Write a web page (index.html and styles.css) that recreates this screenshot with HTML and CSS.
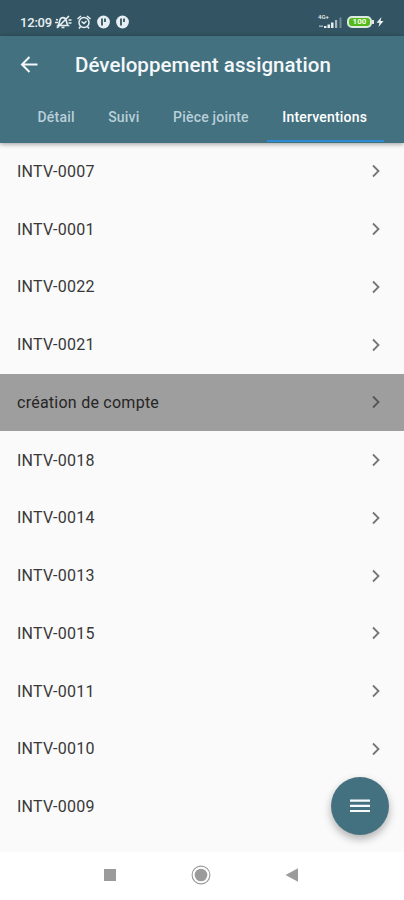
FILE: index.html
```
<!DOCTYPE html>
<html lang="fr">
<head>
  <meta charset="UTF-8">
  <title>Développement assignation</title>
  <link rel="stylesheet" href="styles.css">
</head>
<body>
  <div class="status-bar">
    <span class="time">12:09</span>
    <svg class="status-left" width="78" height="16" viewBox="0 0 78 16" fill="none" stroke="#e8eff2" stroke-width="1.5">
      <!-- muted bell -->
      <path d="M4 11.500c2-2 1-6 3-7.200q2-1.200 4 0c2 1.200 1 5.200 3 7.200zM7.500 13.500h3M3 14L15 2M1 8.500h3M2 5.500l2 .5M14.500 6h3M14.500 9h3" stroke-width="1.700"/>
      <!-- alarm -->
      <circle cx="30" cy="8.500" r="5"/>
      <path d="M23.500 5l3.500-3M36.500 5L33 2M27.500 7.500l2.500 2 2.500-2.500M26.500 12.500l-1.500 2M33.500 12.500l1.500 2"/>
      <g fill="#e8eff2" stroke="none">
        <circle cx="49.500" cy="8" r="6.400"/>
        <circle cx="68.500" cy="8" r="6.400"/>
      </g>
      <path stroke="#335563" stroke-width="1.800" d="M48 4.500v7M51 4.500v3.500M67 4.500v7M70 4.500v3.500"/>
    </svg>
    <div class="signal">
      <span class="network">4G+</span>
      <svg width="26" height="15" viewBox="0 0 26 15" fill="#e8eff2">
        <path d="M1 10.500h4v1.500H1z" opacity=".6"/>
        <path d="M6 11h2.500v2H6zM9.500 9.500H12V13H9.500zM13 7.500h2.500V13H13z"/>
        <path d="M17 5h2.200v8H17z" opacity=".65"/>
        <path d="M21.500 2.500h2V13h-2z" opacity=".35"/>
      </svg>
    </div>
    <div class="battery">100</div>
    <svg class="bolt" width="8" height="12" viewBox="0 0 8 12" fill="#f1f5f6"><path d="M5.500 1L.5 6.800h3L2.500 11l5-6h-3z"/></svg>
  </div>

  <header class="app-bar">
    <div class="title-row">
      <svg class="back" width="18" height="18" viewBox="0 0 18 18" fill="none" stroke="#f4f8fa" stroke-width="2">
        <path d="M17.500 8.500H2.500M9.500 1L2 8.500 9.500 16"/>
      </svg>
      <h1>Développement assignation</h1>
    </div>
    <nav class="tabs">
      <span class="tab">Détail</span>
      <span class="tab">Suivi</span>
      <span class="tab">Pièce jointe</span>
      <span class="tab active">Interventions</span>
    </nav>
  </header>

  <ul class="list"></ul>

  <button class="fab" aria-label="Menu">
    <svg width="20" height="14" viewBox="0 0 20 14" fill="#f7fafb"><path d="M0 .5h20v2.200H0zM0 5.700h20v2.200H0zM0 10.900h20v2.200H0z"/></svg>
  </button>

  <footer class="nav-bar">
    <svg width="14" height="14" viewBox="0 0 14 14" fill="#9b9b9b"><path d="M1 1h12v12H1z"/></svg>
    <svg width="20" height="20" viewBox="0 0 20 20" fill="#9b9b9b">
      <circle cx="10" cy="10" r="6.300"/>
      <circle cx="10" cy="10" r="8.900" fill="none" stroke="#9b9b9b" stroke-width="1.100"/>
    </svg>
    <svg width="14" height="14" viewBox="0 0 14 14" fill="#9b9b9b"><path d="M13 .3v13.400L.5 7z"/></svg>
  </footer>

  <script>
    const items = [
      'INTV-0007', 'INTV-0001', 'INTV-0022', 'INTV-0021', 'création de compte', 'INTV-0018',
      'INTV-0014', 'INTV-0013', 'INTV-0015', 'INTV-0011', 'INTV-0010', 'INTV-0009'
    ];
    const selected = 4;

    document.querySelector('.list').innerHTML = items.map((name, i) => `
      <li class="item${i === selected ? ' selected' : ''}">
        <span>${name}</span>
        <svg width="8" height="14" viewBox="0 0 8 14" fill="none" stroke-width="1.800"><path d="M1 1.500L6.500 7 1 12.500"/></svg>
      </li>`).join('');
  </script>
</body>
</html>
```
FILE: styles.css
```
* {
  box-sizing: border-box;
}
body {
  display: flex;
  flex-direction: column;
  height: 900px;
  margin: 0;
  overflow: hidden;
  font-family: Roboto, sans-serif;
  background-color: #fafafa;
}
.status-bar {
  display: flex;
  align-items: center;
  flex: none;
  height: 36px;
  padding: 8px 20px 0;
  color: #e8eff2;
  background-color: #335563;
}
.time {
  width: 34px;
  font-size: 13px;
  font-weight: 500;
  letter-spacing: -0.2px;
}
.signal {
  display: flex;
  margin-left: auto;
  width: 26px;
  margin-right: 3px;
  position: relative;
}
.network {
  position: absolute;
  top: -1px;
  left: 0;
  font-size: 6px;
  font-weight: 500;
  line-height: 6px;
}
.battery {
  position: relative;
  width: 25px;
  height: 12px;
  border: 2px solid #dbe9df;
  border-radius: 5px;
  background-color: #55b91d;
  color: #f2ffe9;
  font-size: 8px;
  font-weight: 700;
  line-height: 8px;
  text-align: center;
}
.battery::after {
  content: '';
  position: absolute;
  top: 2px;
  right: -4px;
  width: 2px;
  height: 4px;
  background-color: #dbe9df;
}
.bolt {
  margin-left: 4px;
}
.app-bar {
  flex: none;
  height: 106.500px;
  color: #f4f8fa;
  background-color: #43717f;
  box-shadow: 0 1px 5px rgba(0, 0, 0, 0.4);
  z-index: 1;
}
.title-row {
  display: flex;
  align-items: center;
  height: 57px;
  padding-left: 20px;
}
h1 {
  margin: 0 0 0 37px;
  font-size: 20.500px;
  font-weight: 500;
  letter-spacing: 0.04px;
}
.tabs {
  display: flex;
  height: 49px;
  padding: 0 19.500px;
}
.tab {
  padding: 0 15.500px 0 18px;
  font-size: 14px;
  font-weight: 500;
  line-height: 48px;
  letter-spacing: 0.2px;
  color: #b9cfda;
  white-space: nowrap;
}
.tab.active {
  margin-left: 3px;
  padding: 0 17px 0 15px;
  color: #fff;
  border-bottom: 2px solid #2d8bd6;
}
.list {
  flex: 1;
  min-height: 0;
  margin: 0;
  padding: 0;
  list-style: none;
}
.item {
  display: flex;
  align-items: center;
  justify-content: space-between;
  height: 57.750px;
  padding: 0 24px 0 17px;
  font-size: 16px;
  letter-spacing: 0.25px;
  color: #383838;
  stroke: #757575;
}
.item.selected {
  background-color: #9e9e9e;
  color: #262626;
  stroke: #555;
}
.fab {
  position: absolute;
  left: 331px;
  top: 777px;
  display: flex;
  align-items: center;
  justify-content: center;
  width: 58px;
  height: 58px;
  padding: 0;
  border: 0;
  border-radius: 50%;
  background-color: #43717f;
  box-shadow: 0 4px 8px rgba(0, 0, 0, 0.3);
}
.nav-bar {
  display: flex;
  align-items: center;
  justify-content: space-between;
  flex: none;
  height: 48px;
  padding: 0 105px 2px 103px;
  background-color: #fff;
}
```
